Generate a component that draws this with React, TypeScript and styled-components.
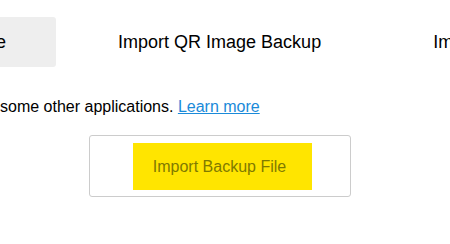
import styled, { createGlobalStyle } from 'styled-components';

const GlobalStyle = createGlobalStyle`
  html, body {
    margin: 0;
    padding: 0;
    background: #ffffff;
    overflow: hidden;
  }

  body {
    font-family: "Liberation Sans", Arial, sans-serif;
    color: #000000;
  }
`;

const Page = styled.div`
  width: 450px;
  height: 244px;
  overflow: hidden;
`;

const TabRow = styled.div`
  display: flex;
  gap: 12px;
  margin: 17px 0 0 -194px;
  white-space: nowrap;
`;

const Tab = styled.div<{ $active?: boolean }>`
  flex: none;
  display: flex;
  align-items: center;
  height: 50px;
  padding: 0 50px;
  border-radius: 3px;
  font-size: 18px;
  background: ${(p) => (p.$active ? '#eeeeee' : 'transparent')};
`;

const Note = styled.p`
  margin: 31px 0 0;
  font-size: 16px;
  white-space: nowrap;
`;

const LearnMore = styled.a`
  color: #1a8ad9;
  text-decoration: underline;
`;

const Content = styled.div`
  display: flex;
  justify-content: flex-start;
  margin: 19px 0 0 89px;
`;

const DropBox = styled.div`
  display: flex;
  padding: 7px 38px 6px 43px;
  border: 1px solid #cccccc;
  border-radius: 3px;
`;

const ImportButton = styled.button`
  width: 179px;
  height: 47px;
  padding: 0 6px 0 0;
  border: none;
  border-radius: 0;
  background: #ffe500;
  color: #7f7a00;
  font-family: "Liberation Sans", Arial, sans-serif;
  font-size: 16px;
  cursor: pointer;
`;

const App = () => (
  <>
    <GlobalStyle />
    <Page>
      <TabRow>
        <Tab $active>Import Backup File</Tab>
        <Tab>Import QR Image Backup</Tab>
        <Tab>Import Text Backup</Tab>
      </TabRow>
      <Note>
        some other applications. <LearnMore href="#learn">Learn more</LearnMore>
      </Note>
      <Content>
        <DropBox>
          <ImportButton>Import Backup File</ImportButton>
        </DropBox>
      </Content>
    </Page>
  </>
);

export default App;
